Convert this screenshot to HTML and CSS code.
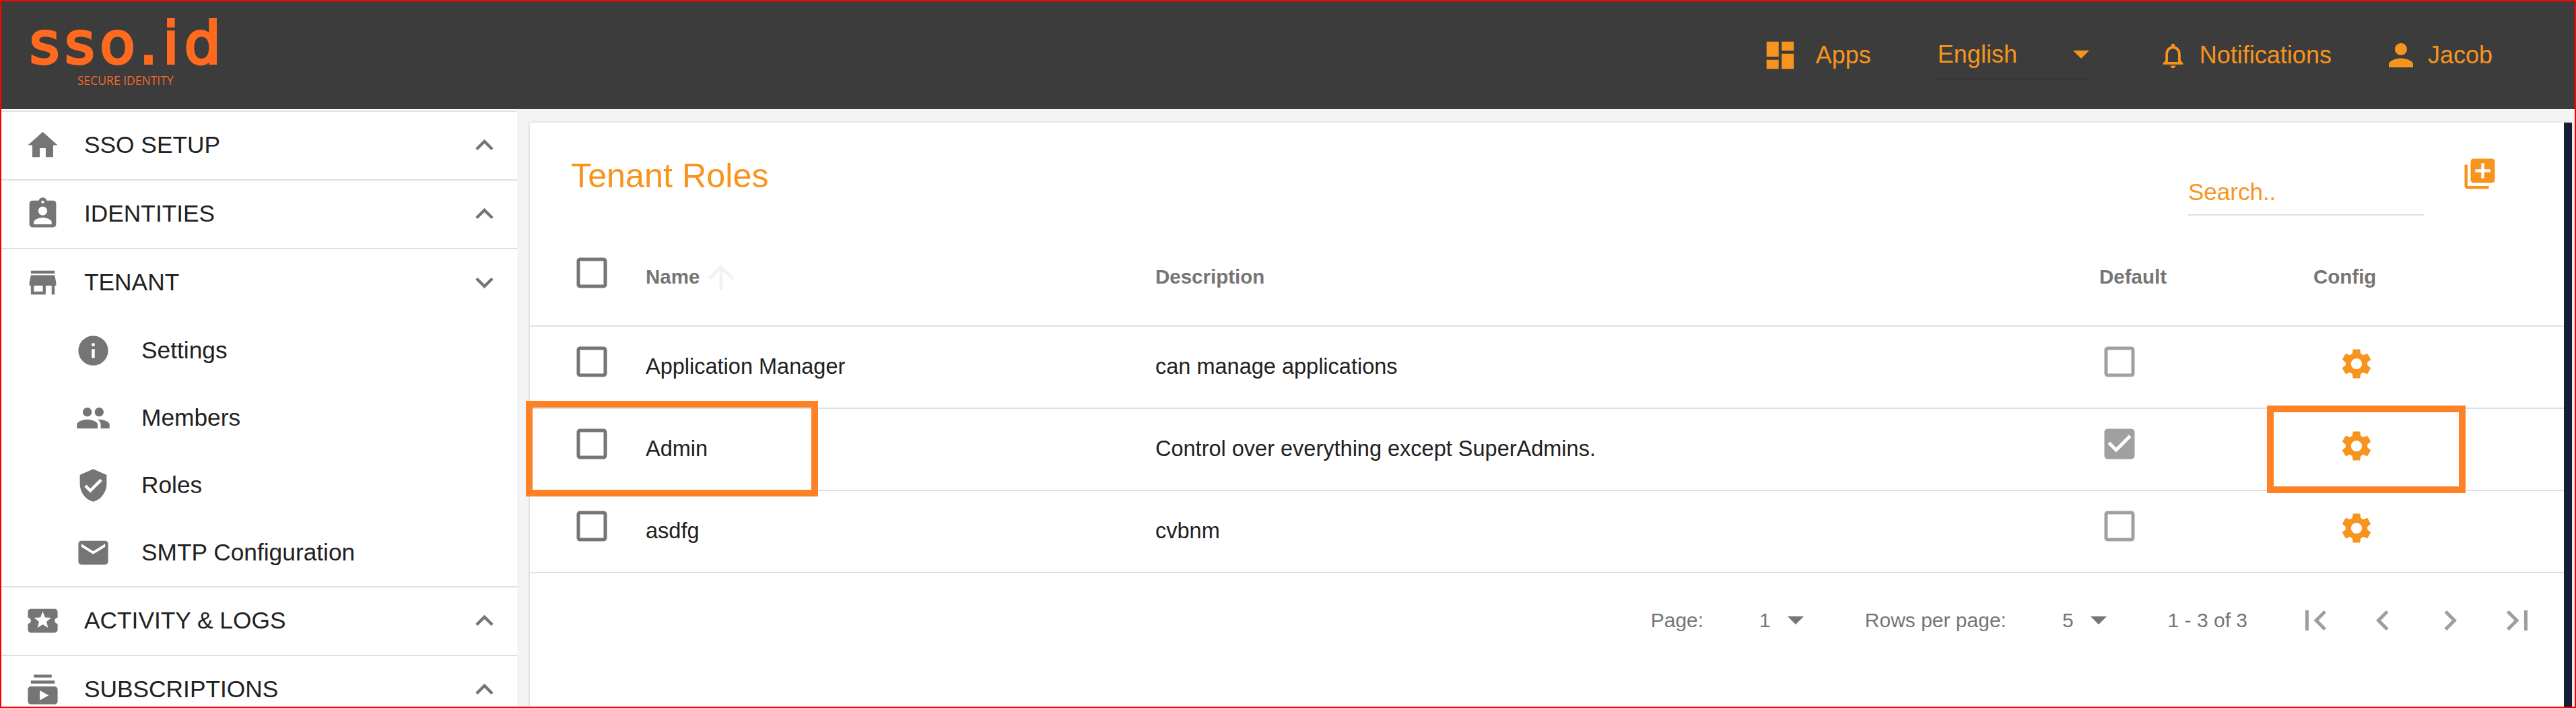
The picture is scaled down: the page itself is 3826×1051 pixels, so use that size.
FILE: index.html
```html
<!DOCTYPE html>
<html lang="en">
<head>
<meta charset="utf-8">
<title>Tenant Roles</title>
<link rel="stylesheet" href="styles.css">
</head>
<body>
<div class="frame">
  <header class="topbar">
    <div class="logo">
      <div class="logo-mark">sso.id</div>
      <div class="logo-sub">SECURE IDENTITY</div>
    </div>
    <nav class="topnav">
      <div class="nav-item nav-apps">
        <svg class="ic54" viewBox="0 0 24 24"><path d="M3 13h8V3H3v10zm0 8h8v-6H3v6zm10 0h8V11h-8v10zm0-18v6h8V3h-8z"/></svg>
        <span>Apps</span>
      </div>
      <div class="lang">
        <span>English</span>
        <svg class="caret" viewBox="7 10 10 5"><path d="M7 10l5 5 5-5z"/></svg>
      </div>
      <div class="nav-item nav-bell">
        <svg class="ic45" viewBox="0 0 24 24"><path d="M12 22c1.1 0 2-.9 2-2h-4c0 1.1.89 2 2 2zm6-6v-5c0-3.07-1.64-5.64-4.5-6.32V4c0-.83-.67-1.5-1.5-1.5s-1.5.67-1.5 1.5v.68C7.63 5.36 6 7.92 6 11v5l-2 2v1h16v-1l-2-2zm-2 1H8v-6c0-2.48 1.51-4.5 4-4.5s4 2.02 4 4.5v6z"/></svg>
        <span>Notifications</span>
      </div>
      <div class="nav-item nav-user">
        <svg class="ic54" viewBox="0 0 24 24"><path d="M12 12c2.21 0 4-1.79 4-4s-1.79-4-4-4-4 1.79-4 4 1.79 4 4 4zm0 2c-2.67 0-8 1.34-8 4v2h16v-2c0-2.66-5.33-4-8-4z"/></svg>
        <span>Jacob</span>
      </div>
    </nav>
  </header>

  <div class="main">
    <aside class="sidebar">
      <div class="side-row">
        <svg class="side-ic" viewBox="0 0 24 24"><path d="M10 20v-6h4v6h5v-8h3L12 3 2 12h3v8z"/></svg>
        <span class="side-label">SSO SETUP</span>
        <svg class="side-ic" viewBox="0 0 24 24"><path d="M12 8l-6 6 1.41 1.41L12 10.83l4.59 4.58L18 14z"/></svg>
      </div>
      <div class="side-row">
        <svg class="side-ic" viewBox="0 0 24 24"><path d="M19 3h-4.18C14.4 1.84 13.3 1 12 1c-1.3 0-2.4.84-2.82 2H5c-1.1 0-2 .9-2 2v14c0 1.1.9 2 2 2h14c1.1 0 2-.9 2-2V5c0-1.1-.9-2-2-2zm-7 0c.55 0 1 .45 1 1s-.45 1-1 1-1-.45-1-1 .45-1 1-1zm0 4c1.66 0 3 1.34 3 3s-1.34 3-3 3-3-1.34-3-3 1.34-3 3-3zm6 12H6v-1.4c0-2 4-3.1 6-3.1s6 1.1 6 3.1V19z"/></svg>
        <span class="side-label">IDENTITIES</span>
        <svg class="side-ic" viewBox="0 0 24 24"><path d="M12 8l-6 6 1.41 1.41L12 10.83l4.59 4.58L18 14z"/></svg>
      </div>
      <div class="side-group">
        <div class="side-row side-row-open">
          <svg class="side-ic" viewBox="0 0 24 24"><path d="M20 4H4v2h16V4zm1 10v-2l-1-5H4l-1 5v2h1v6h10v-6h4v6h2v-6h1zm-9 4H6v-4h6v4z"/></svg>
          <span class="side-label">TENANT</span>
          <svg class="side-ic" viewBox="0 0 24 24"><path d="M16.59 8.59L12 13.17 7.41 8.59 6 10l6 6 6-6z"/></svg>
        </div>
        <div class="sub-row">
          <svg class="side-ic" viewBox="0 0 24 24"><path d="M12 2C6.48 2 2 6.48 2 12s4.48 10 10 10 10-4.48 10-10S17.52 2 12 2zm1 15h-2v-6h2v6zm0-8h-2V7h2v2z"/></svg>
          <span>Settings</span>
        </div>
        <div class="sub-row">
          <svg class="side-ic" viewBox="0 0 24 24"><path d="M16 11c1.66 0 2.99-1.34 2.99-3S17.66 5 16 5c-1.66 0-3 1.34-3 3s1.34 3 3 3zm-8 0c1.66 0 2.99-1.34 2.99-3S9.66 5 8 5C6.34 5 5 6.34 5 8s1.34 3 3 3zm0 2c-2.33 0-7 1.17-7 3.5V19h14v-2.5c0-2.33-4.67-3.5-7-3.5zm8 0c-.29 0-.62.02-.97.05 1.16.84 1.97 1.97 1.97 3.45V19h6v-2.5c0-2.33-4.67-3.5-7-3.5z"/></svg>
          <span>Members</span>
        </div>
        <div class="sub-row">
          <svg class="side-ic" viewBox="0 0 24 24"><path d="M12 1L3 5v6c0 5.55 3.84 10.74 9 12 5.16-1.26 9-6.45 9-12V5l-9-4zm-2 16l-4-4 1.41-1.41L10 14.17l6.59-6.59L18 9l-8 8z"/></svg>
          <span>Roles</span>
        </div>
        <div class="sub-row">
          <svg class="side-ic" viewBox="0 0 24 24"><path d="M20 4H4c-1.1 0-1.99.9-1.99 2L2 18c0 1.1.9 2 2 2h16c1.1 0 2-.9 2-2V6c0-1.1-.9-2-2-2zm0 4l-8 5-8-5V6l8 5 8-5v2z"/></svg>
          <span>SMTP Configuration</span>
        </div>
      </div>
      <div class="side-row">
        <svg class="side-ic" viewBox="0 0 24 24"><path d="M20 12c0-1.1.9-2 2-2V6c0-1.1-.9-2-2-2H4c-1.1 0-1.99.9-1.99 2v4c1.1 0 1.99.9 1.99 2s-.89 2-2 2v4c0 1.1.9 2 2 2h16c1.1 0 2-.9 2-2v-4c-1.1 0-2-.9-2-2zm-4.42 4.8L12 14.5l-3.58 2.3 1.08-4.12-3.29-2.69 4.24-.25L12 5.8l1.54 3.95 4.24.25-3.29 2.69 1.09 4.11z"/></svg>
        <span class="side-label">ACTIVITY &amp; LOGS</span>
        <svg class="side-ic" viewBox="0 0 24 24"><path d="M12 8l-6 6 1.41 1.41L12 10.83l4.59 4.58L18 14z"/></svg>
      </div>
      <div class="side-row">
        <svg class="side-ic" viewBox="0 0 24 24"><path d="M20 8H4V6h16v2zm-2-6H6v2h12V2zm4 10v8c0 1.1-.9 2-2 2H4c-1.1 0-2-.9-2-2v-8c0-1.1.9-2 2-2h16c1.1 0 2 .9 2 2zm-6 4l-6-3.27v6.53L16 16z"/></svg>
        <span class="side-label">SUBSCRIPTIONS</span>
        <svg class="side-ic" viewBox="0 0 24 24"><path d="M12 8l-6 6 1.41 1.41L12 10.83l4.59 4.58L18 14z"/></svg>
      </div>
    </aside>

    <section class="card">
      <div class="toolbar">
        <h1 class="title">Tenant Roles</h1>
        <div class="search">Search..</div>
        <svg class="add" viewBox="0 0 24 24"><path d="M4 6H2v14c0 1.1.9 2 2 2h14v-2H4V6zm16-4H8c-1.1 0-2 .9-2 2v12c0 1.1.9 2 2 2h12c1.1 0 2-.9 2-2V4c0-1.1-.9-2-2-2zm-1 9h-4v4h-2v-4H9V9h4V5h2v4h4v2z"/></svg>
      </div>

      <div class="tr th">
        <svg class="cb cb-head" viewBox="0 0 24 24"><path d="M19 5v14H5V5h14m0-2H5c-1.1 0-2 .9-2 2v14c0 1.1.9 2 2 2h14c1.1 0 2-.9 2-2V5c0-1.1-.9-2-2-2z"/></svg>
        <div class="name-head"><span>Name</span><svg class="sort" viewBox="0 0 24 24"><path d="M4 12l1.41 1.41L11 7.83V20h2V7.83l5.58 5.59L20 12l-8-8-8 8z"/></svg></div>
        <div>Description</div>
        <div>Default</div>
        <div>Config</div>
      </div>

      <div class="tr">
        <svg class="cb" viewBox="0 0 24 24"><path d="M19 5v14H5V5h14m0-2H5c-1.1 0-2 .9-2 2v14c0 1.1.9 2 2 2h14c1.1 0 2-.9 2-2V5c0-1.1-.9-2-2-2z"/></svg>
        <div class="cell">Application Manager</div>
        <div class="cell">can manage applications</div>
        <svg class="cb-off" viewBox="0 0 24 24"><path d="M19 5v14H5V5h14m0-2H5c-1.1 0-2 .9-2 2v14c0 1.1.9 2 2 2h14c1.1 0 2-.9 2-2V5c0-1.1-.9-2-2-2z"/></svg>
        <svg class="gear" viewBox="0 0 24 24"><path d="M19.14 12.94c.04-.3.06-.61.06-.94 0-.32-.02-.64-.07-.94l2.03-1.58c.18-.14.23-.41.12-.61l-1.92-3.32c-.12-.22-.37-.29-.59-.22l-2.39.96c-.5-.38-1.03-.7-1.62-.94l-.36-2.54c-.04-.24-.24-.41-.48-.41h-3.84c-.24 0-.43.17-.47.41l-.36 2.54c-.59.24-1.13.57-1.62.94l-2.39-.96c-.22-.08-.47 0-.59.22L2.74 8.87c-.12.21-.08.47.12.61l2.03 1.58c-.05.3-.09.63-.09.94s.02.64.07.94l-2.03 1.58c-.18.14-.23.41-.12.61l1.92 3.32c.12.22.37.29.59.22l2.39-.96c.5.38 1.03.7 1.62.94l.36 2.54c.05.24.24.41.48.41h3.84c.24 0 .44-.17.47-.41l.36-2.54c.59-.24 1.13-.56 1.62-.94l2.39.96c.22.08.47 0 .59-.22l1.92-3.32c.12-.22.07-.47-.12-.61l-2.01-1.58zM12 15.6c-1.98 0-3.6-1.62-3.6-3.6s1.62-3.6 3.6-3.6 3.6 1.62 3.6 3.6-1.62 3.6-3.6 3.6z"/></svg>
      </div>
      <div class="tr">
        <svg class="cb" viewBox="0 0 24 24"><path d="M19 5v14H5V5h14m0-2H5c-1.1 0-2 .9-2 2v14c0 1.1.9 2 2 2h14c1.1 0 2-.9 2-2V5c0-1.1-.9-2-2-2z"/></svg>
        <div class="cell">Admin</div>
        <div class="cell">Control over everything except SuperAdmins.</div>
        <svg class="cb-off" viewBox="0 0 24 24"><path d="M19 3H5c-1.11 0-2 .9-2 2v14c0 1.1.89 2 2 2h14c1.11 0 2-.9 2-2V5c0-1.1-.89-2-2-2zm-9 14l-5-5 1.41-1.41L10 14.17l7.59-7.59L19 8l-9 9z"/></svg>
        <svg class="gear" viewBox="0 0 24 24"><path d="M19.14 12.94c.04-.3.06-.61.06-.94 0-.32-.02-.64-.07-.94l2.03-1.58c.18-.14.23-.41.12-.61l-1.92-3.32c-.12-.22-.37-.29-.59-.22l-2.39.96c-.5-.38-1.03-.7-1.62-.94l-.36-2.54c-.04-.24-.24-.41-.48-.41h-3.84c-.24 0-.43.17-.47.41l-.36 2.54c-.59.24-1.13.57-1.62.94l-2.39-.96c-.22-.08-.47 0-.59.22L2.74 8.87c-.12.21-.08.47.12.61l2.03 1.58c-.05.3-.09.63-.09.94s.02.64.07.94l-2.03 1.58c-.18.14-.23.41-.12.61l1.92 3.32c.12.22.37.29.59.22l2.39-.96c.5.38 1.03.7 1.62.94l.36 2.54c.05.24.24.41.48.41h3.84c.24 0 .44-.17.47-.41l.36-2.54c.59-.24 1.13-.56 1.62-.94l2.39.96c.22.08.47 0 .59-.22l1.92-3.32c.12-.22.07-.47-.12-.61l-2.01-1.58zM12 15.6c-1.98 0-3.6-1.62-3.6-3.6s1.62-3.6 3.6-3.6 3.6 1.62 3.6 3.6-1.62 3.6-3.6 3.6z"/></svg>
      </div>
      <div class="tr">
        <svg class="cb" viewBox="0 0 24 24"><path d="M19 5v14H5V5h14m0-2H5c-1.1 0-2 .9-2 2v14c0 1.1.9 2 2 2h14c1.1 0 2-.9 2-2V5c0-1.1-.9-2-2-2z"/></svg>
        <div class="cell">asdfg</div>
        <div class="cell">cvbnm</div>
        <svg class="cb-off" viewBox="0 0 24 24"><path d="M19 5v14H5V5h14m0-2H5c-1.1 0-2 .9-2 2v14c0 1.1.9 2 2 2h14c1.1 0 2-.9 2-2V5c0-1.1-.9-2-2-2z"/></svg>
        <svg class="gear" viewBox="0 0 24 24"><path d="M19.14 12.94c.04-.3.06-.61.06-.94 0-.32-.02-.64-.07-.94l2.03-1.58c.18-.14.23-.41.12-.61l-1.92-3.32c-.12-.22-.37-.29-.59-.22l-2.39.96c-.5-.38-1.03-.7-1.62-.94l-.36-2.54c-.04-.24-.24-.41-.48-.41h-3.84c-.24 0-.43.17-.47.41l-.36 2.54c-.59.24-1.13.57-1.62.94l-2.39-.96c-.22-.08-.47 0-.59.22L2.74 8.87c-.12.21-.08.47.12.61l2.03 1.58c-.05.3-.09.63-.09.94s.02.64.07.94l-2.03 1.58c-.18.14-.23.41-.12.61l1.92 3.32c.12.22.37.29.59.22l2.39-.96c.5.38 1.03.7 1.62.94l.36 2.54c.05.24.24.41.48.41h3.84c.24 0 .44-.17.47-.41l.36-2.54c.59-.24 1.13-.56 1.62-.94l2.39.96c.22.08.47 0 .59-.22l1.92-3.32c.12-.22.07-.47-.12-.61l-2.01-1.58zM12 15.6c-1.98 0-3.6-1.62-3.6-3.6s1.62-3.6 3.6-3.6 3.6 1.62 3.6 3.6-1.62 3.6-3.6 3.6z"/></svg>
      </div>

      <div class="pager">
        <span>Page:</span>
        <span class="pg-val">1</span>
        <svg class="pg-caret" viewBox="7 10 10 5"><path d="M7 10l5 5 5-5z"/></svg>
        <span class="pg-group">Rows per page:</span>
        <span class="pg-val">5</span>
        <svg class="pg-caret" viewBox="7 10 10 5"><path d="M7 10l5 5 5-5z"/></svg>
        <span class="pg-group">1 - 3 of 3</span>
        <div class="pg-nav">
          <svg viewBox="0 0 24 24"><path d="M18.41 16.59L13.82 12l4.59-4.59L17 6l-6 6 6 6zM6 6h2v12H6z"/></svg>
          <svg viewBox="0 0 24 24"><path d="M15.41 7.41L14 6l-6 6 6 6 1.41-1.41L10.83 12z"/></svg>
          <svg viewBox="0 0 24 24"><path d="M10 6L8.59 7.41 13.17 12l-4.58 4.59L10 18l6-6z"/></svg>
          <svg viewBox="0 0 24 24"><path d="M5.59 7.41L10.18 12l-4.59 4.59L7 18l6-6-6-6zM16 6h2v12h-2z"/></svg>
        </div>
      </div>
    </section>
  </div>

  <div class="mark mark-name"></div>
  <div class="mark mark-config"></div>
</div>
</body>
</html>
```

FILE: styles.css
```css
* { box-sizing: border-box; }
html, body { margin: 0; padding: 0; }
body { font-family: "Liberation Sans", Arial, sans-serif; color: #212121; background: #fff; }
svg { display: block; flex: none; fill: currentColor; }

.frame {
  position: relative;
  width: 3826px;
  height: 1051px;
  border: 2px solid #fe0000;
  overflow: hidden;
  display: flex;
  flex-direction: column;
  background: #f4f4f4;
}

/* top bar */
.topbar {
  flex: none;
  height: 160px;
  background: #3c3c3c;
  color: #f7941d;
  display: flex;
  align-items: center;
  font-size: 36px;
}
.logo { margin-left: 42px; width: 300px; align-self: flex-start; color: #ff6a1f; }
.logo-mark {
  font: 400 85px/88px "DejaVu Sans", sans-serif;
  letter-spacing: 8px;
  -webkit-text-stroke: 4px #ff6a1f;
  margin-top: 19px;
  height: 88px;
}
.logo-sub {
  font: 17.5px/20px "Open Sans", sans-serif;
  margin-left: 71px;
  color: #f0692a;
}
.topnav { margin-left: auto; margin-right: 122px; display: flex; align-items: center; }
.nav-item { display: flex; align-items: center; }
.nav-apps { gap: 26px; }
.nav-bell { gap: 17px; margin-left: 102px; }
.nav-user { gap: 13px; margin-left: 76px; }
.ic54 { width: 54px; height: 54px; }
.ic45 { width: 45px; height: 45px; }
.lang {
  width: 225px;
  height: 72px;
  margin-left: 99px;
  border-bottom: 2px solid #333;
  display: flex;
  align-items: center;
  justify-content: space-between;
}
.caret { width: 24px; height: 12px; }

/* layout */
.main { flex: 1; min-height: 0; display: flex; padding-right: 4px; }

/* sidebar */
.sidebar {
  flex: none;
  width: 766px;
  background: #fff;
  padding-top: 2px;
  overflow: hidden;
  font-size: 35.3px;
}
.side-row {
  height: 102px;
  padding: 0 22px 2px 35px;
  display: flex;
  align-items: center;
  gap: 35px;
  border-top: 2px solid #e0e0e0;
}
.side-row-open { border-top: 0; height: 100px; }
.side-group { border-top: 2px solid #e0e0e0; }
.side-label { flex: 1; }
.side-ic { width: 53px; height: 53px; color: #757575; }
.sub-row {
  height: 100px;
  padding-left: 110px;
  display: flex;
  align-items: center;
  gap: 45px;
}

/* card */
.card {
  flex: 1;
  min-width: 0;
  margin: 20px 0 0 19px;
  background: #fff;
  border-right: 12px solid #171d36;
  box-shadow: 0 0 4px rgba(0, 0, 0, .18);
  display: flex;
  flex-direction: column;
}
.toolbar { flex: none; height: 153px; display: flex; align-items: flex-start; color: #f7941d; }
.title { margin: 49px 0 0 61px; font-size: 50.3px; font-weight: 400; line-height: 60px; flex: 1; }
.search {
  width: 350px;
  height: 70px;
  margin-top: 68px;
  font-size: 35px;
  line-height: 70px;
  border-bottom: 2px solid #e0e0e0;
}
.add { width: 54px; height: 54px; margin: 49px 98px 0 56px; }

/* table */
.tr {
  flex: none;
  display: grid;
  grid-template-columns: 172px 757px 1402px 318px 1fr;
  align-items: center;
  height: 122px;
  border-bottom: 2px solid #e0e0e0;
  font-size: 32.5px;
}
.cell { margin-bottom: 2px; }
.th { height: 150px; font-size: 29.5px; font-weight: 700; color: #757575; }
.th > div { margin-top: 4px; }
.name-head { display: flex; align-items: center; gap: 3px; }
.sort { width: 58px; height: 58px; color: #f2f2f2; margin-top: 2px; }
.cb { width: 60px; height: 60px; margin: 0 0 16px 62px; color: #757575; }
.cb-head { margin-bottom: 9px; }
.cb-off { width: 60px; height: 60px; margin-bottom: 16px; color: #a0a0a0; }
.gear { width: 54px; height: 54px; margin: 0 0 11px 37px; color: #f7941d; }

/* pager */
.pager {
  flex: none;
  height: 140px;
  padding-right: 39px;
  display: flex;
  align-items: center;
  justify-content: flex-end;
  font-size: 30px;
  color: #757575;
}
.pg-val { margin-left: 83px; }
.pg-caret { width: 24px; height: 12px; margin-left: 25px; }
.pg-group { margin-left: 91px; }
.pg-nav { display: flex; gap: 40px; margin-left: 71px; color: #9e9e9e; }
.pg-nav svg { width: 60px; height: 60px; }

/* screenshot annotations drawn over the table */
.mark { position: absolute; border: 10px solid #ff8126; }
.mark-name { left: 779px; top: 593px; width: 434px; height: 142px; }
.mark-config { left: 3365px; top: 600px; width: 295px; height: 130px; }
```
